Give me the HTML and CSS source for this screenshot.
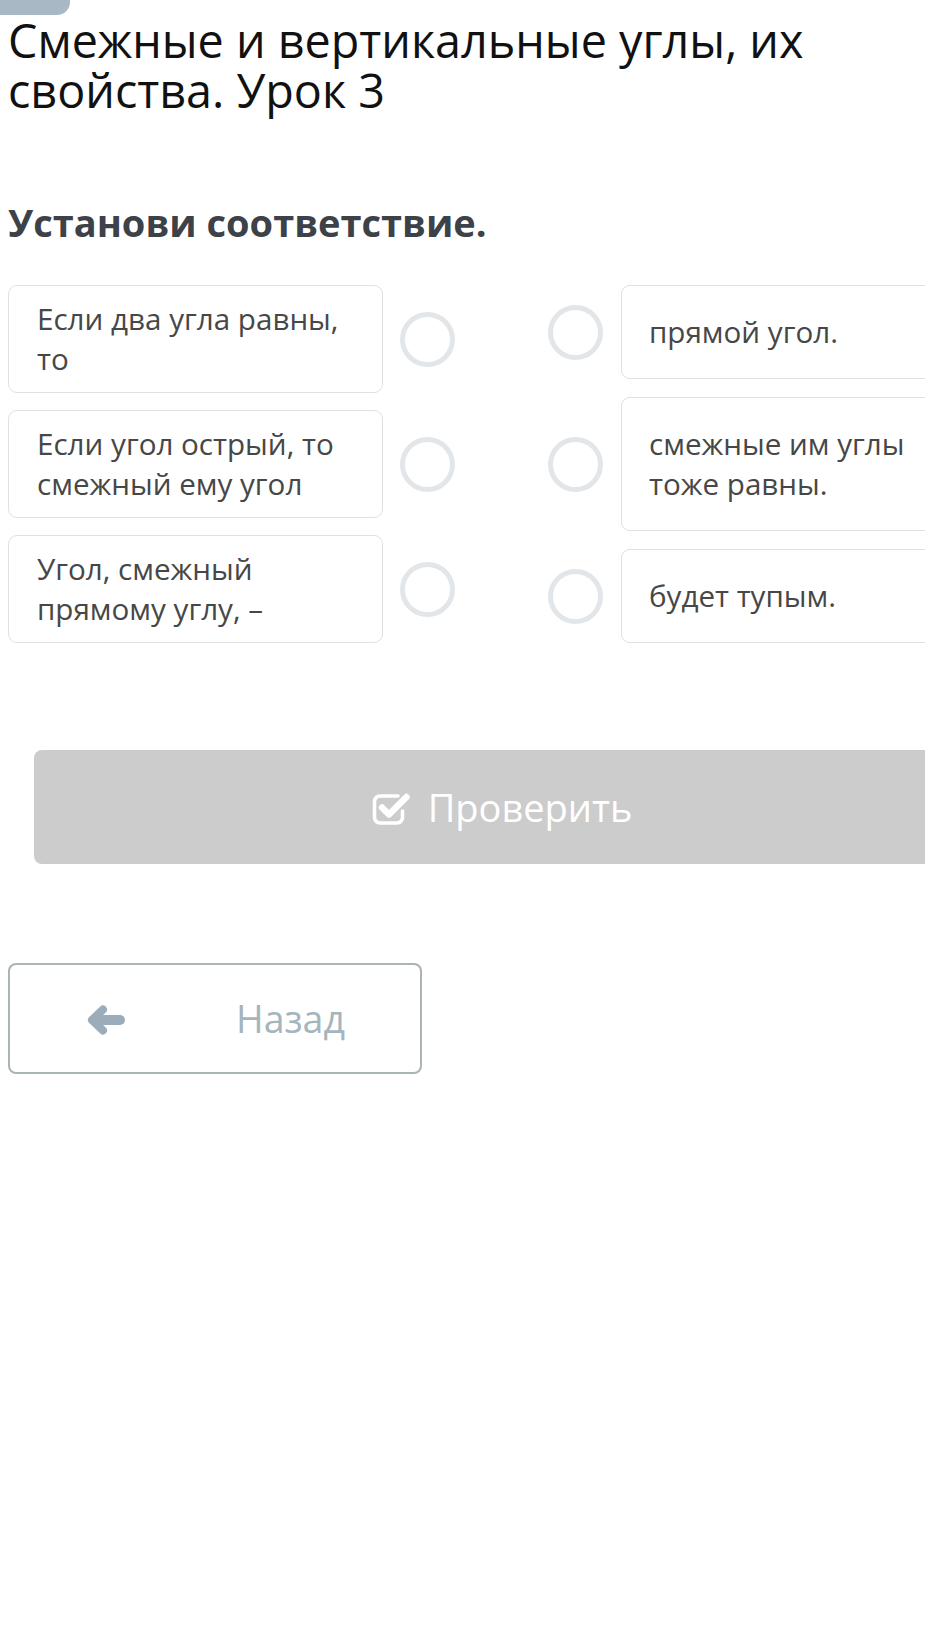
FILE: index.html
```html
<!DOCTYPE html>
<html lang="ru">
<head>
<meta charset="utf-8">
<title>Смежные и вертикальные углы</title>
<link rel="stylesheet" href="styles.css">
</head>
<body>
<div class="page">
  <div class="tab"></div>
  <h1 class="title">Смежные и вертикальные углы, их свойства. Урок 3</h1>
  <h2 class="task">Установи соответствие.</h2>

  <div class="match">
    <div class="col col-left">
      <div class="row">
        <div class="card card-left">Если два угла равны, то</div>
        <span class="dot"></span>
      </div>
      <div class="row">
        <div class="card card-left">Если угол острый, то смежный ему угол</div>
        <span class="dot"></span>
      </div>
      <div class="row">
        <div class="card card-left">Угол, смежный прямому углу, –</div>
        <span class="dot"></span>
      </div>
    </div>
    <div class="col col-right">
      <div class="row">
        <span class="dot"></span>
        <div class="card card-right">прямой угол.</div>
      </div>
      <div class="row">
        <span class="dot"></span>
        <div class="card card-right">смежные им углы тоже равны.</div>
      </div>
      <div class="row">
        <span class="dot"></span>
        <div class="card card-right">будет тупым.</div>
      </div>
    </div>
  </div>

  <div class="check-btn">
    <svg class="check-icon" width="40" height="33" viewBox="0 0 40 33" aria-hidden="true">
      <path d="M26 4 H8 a5.5 5.5 0 0 0 -5.5 5.5 V25.5 a5.5 5.5 0 0 0 5.5 5.5 H25 a5.5 5.5 0 0 0 5.5 -5.5 V19" fill="none" stroke="#fff" stroke-width="3.6" stroke-linecap="round"/>
      <path d="M10 15.5 L17 22.5 L34.5 5" fill="none" stroke="#fff" stroke-width="6.5" stroke-linecap="round" stroke-linejoin="round"/>
    </svg>
    <span>Проверить</span>
  </div>

  <div class="back-btn">
    <svg class="back-icon" width="38" height="30" viewBox="0 0 38 30" aria-hidden="true">
      <path d="M9 15 H33" fill="none" stroke="#9badba" stroke-width="10" stroke-linecap="round"/>
      <path d="M16 4.5 L5 15 L16 25.5" fill="none" stroke="#9badba" stroke-width="8" stroke-linecap="round" stroke-linejoin="round"/>
    </svg>
    <span>Назад</span>
  </div>
</div>
</body>
</html>
```

FILE: styles.css
```css
html, body {
  margin: 0;
  padding: 0;
  overflow: hidden;
  background: #ffffff;
}

.page {
  width: 988px;
  padding: 0 8px;
  font-family: "Open Sans", "Noto Sans", sans-serif;
}

.tab {
  width: 70px;
  height: 15px;
  margin-left: -8px;
  background: #a8b9c5;
  border-bottom-right-radius: 13px;
}

.title {
  margin: 0;
  max-width: 905px;
  font-size: 46.7px;
  line-height: 50px;
  font-weight: 400;
  color: #111111;
}

.task {
  margin: 82px 0 0;
  font-size: 38px;
  line-height: 50px;
  font-weight: 700;
  color: #3d4148;
}

.match {
  margin-top: 38px;
  display: flex;
  gap: 93px;
}

.col {
  display: flex;
  flex-direction: column;
  gap: 17px;
}

.col-right {
  justify-content: space-between;
}

.row {
  display: flex;
  align-items: center;
  gap: 17px;
}

.col-right .row {
  gap: 18px;
}

.card {
  width: 375px;
  box-sizing: border-box;
  border: 1px solid #e1e1e1;
  border-radius: 9px;
  font-size: 29.6px;
  line-height: 40px;
  color: #474747;
  background: #ffffff;
}

.card-left {
  padding: 13px 14px 13px 28px;
}

.card-right {
  padding: 26px 20px 26px 27px;
}

.dot {
  flex: none;
  width: 55px;
  height: 55px;
  box-sizing: border-box;
  border: 5px solid #e3e6e9;
  border-radius: 50%;
}

.check-btn {
  margin: 107px 26px 0;
  height: 114px;
  background: #cccccc;
  border-radius: 8px;
  display: flex;
  align-items: center;
  justify-content: center;
  gap: 16px;
  color: #ffffff;
  font-size: 38px;
}

.check-icon {
  flex: none;
  margin-top: 2px;
}

.back-btn {
  margin-top: 99px;
  width: 414px;
  height: 111px;
  box-sizing: border-box;
  border: 2px solid #abb4b4;
  border-radius: 8px;
  display: flex;
  align-items: center;
  padding-left: 77px;
  gap: 111px;
  color: #a5b5be;
  font-size: 37.5px;
}

.back-icon {
  flex: none;
  margin-top: 2px;
}
```
